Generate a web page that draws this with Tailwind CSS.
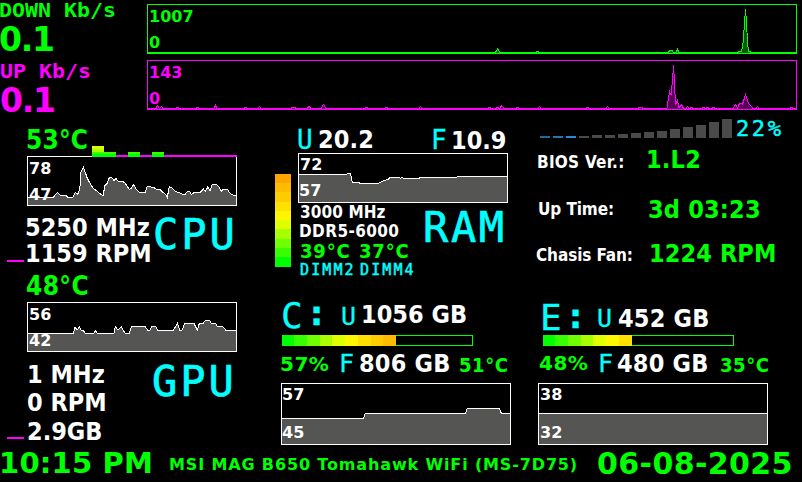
<!DOCTYPE html>
<html lang="en">
<head>
<meta charset="utf-8">
<title>System Monitor</title>
<script src="https://cdn.jsdelivr.net/npm/@tailwindcss/browser@4"></script>
</head>
<body class="bg-black overflow-hidden">
<main class="flex h-[482px] w-[802px] flex-col overflow-hidden bg-black whitespace-nowrap font-bold text-white font-['DejaVu_Sans_Condensed','DejaVu_Sans',sans-serif]">

  <!-- Network -->
  <header class="flex h-[117px] shrink-0 font-['DejaVu_Sans',sans-serif]">
    <div class="flex w-[147px] shrink-0 flex-col">
      <div class="mt-px -ml-px h-[19px] w-[103px] origin-left scale-x-[1.137] text-[19px] leading-[18px] text-[#0f0] font-['DejaVu_Sans_Mono',monospace]">DOWN Kb/s</div>
      <div class="mt-[3px] -ml-px h-[33px] text-[33px] leading-[33px] tracking-[-1.2px] text-[#0f0]">0.1</div>
      <div class="mt-[6px] h-[19px] w-[80px] origin-left scale-x-[1.137] text-[19px] leading-[18px] text-[#f0f] font-['DejaVu_Sans_Mono',monospace]">UP Kb/s</div>
      <div class="mt-[3px] h-[33px] text-[33px] leading-[33px] tracking-[-1.2px] text-[#f0f]">0.1</div>
    </div>
    <div class="flex flex-col gap-[6px] pt-1 text-[16px] leading-[17px]">
      <div class="relative flex h-[50px] w-[650px] flex-col text-[#0f0]">
        <svg class="absolute inset-0" width="650" height="50" viewBox="147 4 650 50" shape-rendering="crispEdges">
          <path d="M147 52.5H495L496.5 51L497.5 48.5L499 51L500 52.5H536V51.5H538V52.5H668L670 50.5H672L673.5 52.5H676L677.5 49.5L679 52.5H738V51.5H741L742.5 48L743.5 38L744.5 22L745.5 9.5L746.5 22L747.5 42L748.5 51.5H750V52.5H796" fill="#005500" stroke="#0f0"/>
          <rect x="147.5" y="4.5" width="649" height="49" fill="none" stroke="#0f0"/>
        </svg>
        <span class="relative mt-1 ml-0.5">1007</span>
        <span class="relative mt-[9px] ml-0.5">0</span>
      </div>
      <div class="relative flex h-[50px] w-[650px] flex-col text-[#f0f]">
        <svg class="absolute inset-0" width="650" height="50" viewBox="147 60 650 50" shape-rendering="crispEdges">
          <path d="M147 108.5H156L157.5 105.5L159.500 108.500L161.500 106.500L163 108.500H176V107.500H178V108.500H196V107.500H198V108.500H214L215.500 105.500L217 108.500H244V107.500H246V108.500H258L259.500 106.500L261 108.500H291V107.500H295V108.500H307L309 106.500L311 108.500H321L323.500 104.500L326 108.500H365V107.500H367V108.500H385V107.500H387V108.500H419L420.500 106.500L422 108.500H488V107.500H490V108.500H496V107.500H498V108.500H500L501.500 105.500L504 108.500H516V107.500H518V108.500H538L539.500 106.500L541 108.500H586V107.500H588V108.500H606L607.500 106.500L609 108.500H638V107.500H642V108.500H667L668.500 98L669.500 91.500L671 95L672.500 80L673.500 65.500L674.500 82L675.500 105L677.500 100L679 108L681.500 104.500L683.500 108.500H686L687.500 106.500L689 108.500H690V107.500H692V108.500H702V107.500H704V108.500H706V107.500H708V108.500H712V107.500H714V108.500H733L735.500 104.500L737.500 108L739.500 103.500L742.500 104L744.500 98L745.500 93.500L746.500 98L748.500 103.500L751 106L753 108.500H756L757.500 106.500L759 108.500H790V107.500H792V108.500H796" fill="#550055" stroke="#f0f"/>
          <rect x="147.500" y="60.500" width="649" height="49" fill="none" stroke="#f0f"/>
        </svg>
        <span class="relative mt-1 ml-0.5">143</span>
        <span class="relative mt-[9px] ml-0.5">0</span>
      </div>
    </div>
  </header>

  <div class="flex h-[331px] shrink-0">

    <!-- CPU and GPU -->
    <section class="flex w-[265px] shrink-0 flex-col">
      <div class="relative z-10 flex h-10 shrink-0 items-end">
        <div class="mb-1 ml-[26px] w-[66px] shrink-0 text-[26px] leading-[26px] tracking-[0.2px] text-[#0f0]">53°C</div>
        <div class="flex w-3 flex-col">
          <div class="h-[3px] bg-[#e0ff00]"></div><div class="h-[3px] bg-[#a8ff00]"></div><div class="h-[2px] bg-[#38ff00]"></div><div class="h-[3px] bg-[#0f0]"></div>
        </div>
        <div class="h-[5px] w-3 border-t-2 border-[#38ff00] bg-[#0f0]"></div>
        <div class="h-[2px] w-3 bg-[#f0f]"></div>
        <div class="h-[5px] w-3 border-t-2 border-[#38ff00] bg-[#0f0]"></div>
        <div class="h-[2px] w-3 bg-[#f0f]"></div>
        <div class="h-[5px] w-3 border-t-2 border-[#38ff00] bg-[#0f0]"></div>
        <div class="h-[2px] w-[73px] bg-[#f0f]"></div>
      </div>
      <div class="relative -mt-px ml-[27px] flex h-[50px] w-[210px] shrink-0 flex-col text-[16px] leading-[17px] font-['DejaVu_Sans',sans-serif]">
        <svg class="absolute inset-0" width="210" height="50" viewBox="81 108 630 150" shape-rendering="crispEdges">
          <path d="M81 257V232H160L172 217L180 225L198 226L203 232H218L226 217L232 223L236 219L240 200L243 155L250 142L256 158L262 175L270 190L278 203L290 213L300 221L309 227L315 196L322 190L328 173H336L342 182L348 176L354 183H366L376 190L388 209L394 205L401 193L408 208L418 217H436L442 199L460 202L470 208H480L488 216L500 227L502 232L508 199L518 206L526 215L536 217L546 222H556L562 214H568L574 223L586 216H602L610 207L616 214L624 200L630 212L637 193H648L656 200L664 214L670 208H682L690 220L700 226H711V257" fill="#555553" stroke="#fff" stroke-width="3"/>
          <rect x="82.500" y="109.500" width="627" height="147" fill="none" stroke="#fff" stroke-width="3"/>
        </svg>
        <span class="relative mt-1 ml-0.5">78</span>
        <span class="relative mt-[9px] ml-0.5">47</span>
      </div>
      <div class="flex h-[67px] shrink-0">
        <div class="mt-[54px] ml-[7px] h-[2px] w-[17px] bg-[#f0f]"></div>
        <div class="mt-[9px] ml-px w-[128px] shrink-0 text-[25px]">
          <div class="h-[26px] leading-[25px]">5250 MHz</div>
          <div class="h-[25px] leading-[25px]">1159 RPM</div>
        </div>
        <div class="mt-2 text-[42px] leading-[41px] font-normal tracking-[3px] text-[#0ff] [-webkit-text-stroke:0.7px_#0ff] font-['DejaVu_Sans_Mono',monospace]">CPU</div>
      </div>

      <div class="ml-[26px] h-[29px] shrink-0 text-[26px] leading-[26px] tracking-[0.4px] text-[#0f0]">48°C</div>
      <div class="relative ml-[27px] flex h-[50px] w-[210px] shrink-0 flex-col text-[16px] leading-[17px] font-['DejaVu_Sans',sans-serif]">
        <svg class="absolute inset-0" width="210" height="50" viewBox="81 96 630 150" shape-rendering="crispEdges">
          <path d="M81 245V190H220L225 170L231 181L238 170L244 181H250L255 190H282L287 181L291 190H342L346 170L354 181L364 170L375 190H388L394 170H436L443 181H449L455 170H467L473 181H520L532 160L539 181H546L554 160H582L592 181L598 160H610L616 151H628L634 160H646L652 169H668L678 181H711V245" fill="#555553" stroke="#fff" stroke-width="3"/>
          <rect x="82.500" y="97.500" width="627" height="147" fill="none" stroke="#fff" stroke-width="3"/>
        </svg>
        <span class="relative mt-1 ml-0.5">56</span>
        <span class="relative mt-[9px] ml-0.5">42</span>
      </div>
      <div class="flex shrink-0">
        <div class="mt-[85px] ml-[7px] h-[2px] w-[17px] bg-[#f0f]"></div>
        <div class="mt-[10px] ml-[3px] w-[125px] shrink-0 text-[25px] leading-[25px]">
          <div class="h-7">1 MHz</div>
          <div class="h-[29px]">0 RPM</div>
          <div class="h-[25px]">2.9GB</div>
        </div>
        <div class="mt-[9px] text-[42px] leading-[41px] font-normal tracking-[3px] text-[#0ff] [-webkit-text-stroke:0.7px_#0ff] font-['DejaVu_Sans_Mono',monospace]">GPU</div>
      </div>
    </section>

    <!-- RAM and drive C -->
    <section class="flex w-[260px] shrink-0 flex-col">
      <div class="ml-[32px] flex h-9 shrink-0 pt-[10px] text-[25px] leading-[25px]">
        <div class="mt-px w-[21px] text-[26px] font-normal text-[#0ff] [-webkit-text-stroke:0.3px_#0ff] font-['DejaVu_Sans_Mono',monospace]">U</div>
        <div class="w-[113px] tracking-[0.1px]">20.2</div>
        <div class="mt-px w-5 text-[26px] font-normal text-[#0ff] [-webkit-text-stroke:0.3px_#0ff] font-['DejaVu_Sans_Mono',monospace]">F</div>
        <div class="mt-px">10.9</div>
      </div>
      <div class="flex h-[144px] shrink-0">
        <div class="mt-[21px] ml-[10px] flex h-[93px] w-4 shrink-0 flex-col">
          <div class="h-[9px] bg-[#ffa500]"></div><div class="h-[9px] bg-[#ffbb00]"></div><div class="h-[10px] bg-[#ffcc00]"></div><div class="h-[9px] bg-[#ffe000]"></div><div class="h-[9px] bg-[#fff700]"></div><div class="h-[9px] bg-[#e0ff00]"></div><div class="h-[10px] bg-[#a8ff00]"></div><div class="h-[9px] bg-[#70ff00]"></div><div class="h-[9px] bg-[#38ff00]"></div><div class="h-[10px] bg-[#0f0]"></div>
        </div>
        <div class="ml-[7px] flex flex-col">
          <div class="relative flex h-[50px] w-[210px] shrink-0 flex-col text-[16px] leading-[17px] font-['DejaVu_Sans',sans-serif]">
            <svg class="absolute inset-0" width="210" height="50" viewBox="99 99 630 150" shape-rendering="crispEdges">
              <path d="M99 248V163H245L249 160H256L262 187H280L285 190H340L358 181L370 178L376 172H402L406 175L410 172L415 175H462V172H576L578 169H729V248" fill="#555553" stroke="#fff" stroke-width="3"/>
              <rect x="100.500" y="100.500" width="627" height="147" fill="none" stroke="#fff" stroke-width="3"/>
            </svg>
            <span class="relative mt-[3px] ml-0.5">72</span>
            <span class="relative mt-[9px] ml-px">57</span>
          </div>
          <div class="flex">
            <div class="mt-px w-[125px] pl-px text-[17px] leading-[17px]">
              <div class="ml-px h-[19px] tracking-[0.1px]">3000 MHz</div>
              <div class="h-[18px] tracking-[0.4px]">DDR5-6000</div>
              <div class="ml-px flex h-[21px] text-[20px] leading-[20px] tracking-[0.8px] text-[#0f0]"><span class="w-[59px]">39°C</span><span>37°C</span></div>
              <div class="ml-px flex text-[15px] leading-[16px] font-normal tracking-[2.1px] text-[#0ff] [-webkit-text-stroke:0.5px_#0ff] font-['DejaVu_Sans_Mono',monospace]"><span class="w-[60px]">DIMM2</span><span>DIMM4</span></div>
            </div>
            <div class="mt-1 text-[42px] leading-[41px] tracking-[2.6px] text-[#0ff] font-normal [-webkit-text-stroke:0.7px_#0ff] font-['DejaVu_Sans_Mono',monospace]">RAM</div>
          </div>
        </div>
      </div>

      <div class="ml-[16px] flex h-[38px] shrink-0 text-[25px] leading-[25px]">
        <div class="w-[60px] text-[36px] leading-[37px] font-normal tracking-[3px] text-[#0ff] [-webkit-text-stroke:0.3px_#0ff] font-['DejaVu_Sans_Mono',monospace]">C<span class="relative -top-[3px] font-bold">:</span></div>
        <div class="mt-[7px] w-5 font-normal text-[#0ff] [-webkit-text-stroke:0.3px_#0ff] font-['DejaVu_Sans_Mono',monospace]">U</div>
        <div class="mt-[5px]">1056 GB</div>
      </div>
      <div class="ml-[17px] flex h-[11px] w-[191px] shrink-0 border border-[#0f0]">
        <div class="-my-px -ml-px w-3 bg-[#0f0]"></div><div class="-my-px w-[13px] bg-[#38ff00]"></div><div class="-my-px w-[13px] bg-[#70ff00]"></div><div class="-my-px w-3 bg-[#a8ff00]"></div><div class="-my-px w-[13px] bg-[#e0ff00]"></div><div class="-my-px w-[13px] bg-[#fff700]"></div><div class="-my-px w-[13px] bg-[#ffe000]"></div><div class="-my-px w-3 bg-[#ffcc00]"></div><div class="-my-px w-[13px] bg-[#ffbb00]"></div>
      </div>
      <div class="ml-[15px] flex h-[37px] shrink-0 pt-[5px] text-[25px] leading-[25px]">
        <div class="mt-[3px] w-[59px] text-[20px] leading-[20px] tracking-[0.5px] text-[#0f0] font-['DejaVu_Sans',sans-serif]">57%</div>
        <div class="w-5 font-normal text-[#0ff] [-webkit-text-stroke:0.3px_#0ff] font-['DejaVu_Sans_Mono',monospace]">F</div>
        <div class="w-[100px] tracking-[0.2px]">806 GB</div>
        <div class="mt-1 text-[20px] leading-[20px] tracking-[0.6px] text-[#0f0]">51°C</div>
      </div>
      <div class="relative ml-4 flex h-[62px] w-[230px] shrink-0 flex-col text-[16px] leading-[17px] font-['DejaVu_Sans',sans-serif]">
        <svg class="absolute inset-0" width="230" height="62" viewBox="33 279 690 186" shape-rendering="crispEdges">
          <path d="M33 464V385H280L286 370H586L592 355H688L694 370H723V464" fill="#555553" stroke="#fff" stroke-width="3"/>
          <rect x="34.500" y="280.500" width="687" height="183" fill="none" stroke="#fff" stroke-width="3"/>
        </svg>
        <span class="relative mt-[3px] ml-px">57</span>
        <span class="relative mt-[21px] ml-px">45</span>
      </div>
    </section>

    <!-- Board info and drive E -->
    <section class="flex w-[277px] shrink-0 flex-col">
      <div class="flex h-[31px] shrink-0">
        <div class="ml-[15px] flex h-[21px] w-[196px] shrink-0 items-end gap-[3px]">
          <div class="h-[2px] w-[10px] shrink-0 bg-[#1b6a9c]"></div><div class="h-[2px] w-[10px] shrink-0 bg-[#1f78b0]"></div><div class="h-[2px] w-[10px] shrink-0 bg-[#1f8fdc]"></div><div class="h-[2px] w-[10px] shrink-0 bg-[#4a4a4a]"></div><div class="h-[3px] w-[10px] shrink-0 bg-[#4a4a4a]"></div><div class="h-[3px] w-[10px] shrink-0 bg-[#4a4a4a]"></div><div class="h-[4px] w-[10px] shrink-0 bg-[#4a4a4a]"></div><div class="h-[5px] w-[10px] shrink-0 bg-[#4a4a4a]"></div><div class="h-[6px] w-[10px] shrink-0 bg-[#4a4a4a]"></div><div class="h-[7px] w-[10px] shrink-0 bg-[#4a4a4a]"></div><div class="h-[9px] w-[10px] shrink-0 bg-[#4a4a4a]"></div><div class="h-[11px] w-[10px] shrink-0 bg-[#4a4a4a]"></div><div class="h-[13px] w-[10px] shrink-0 bg-[#4a4a4a]"></div><div class="h-4 w-[10px] shrink-0 bg-[#4a4a4a]"></div><div class="h-[19px] w-[10px] shrink-0 bg-[#4a4a4a]"></div>
        </div>
        <div class="text-[22px] leading-[23px] font-normal tracking-[2.6px] text-[#0ff] [-webkit-text-stroke:0.5px_#0ff] font-['DejaVu_Sans_Mono',monospace]">22%</div>
      </div>
      <div class="ml-[12px] flex h-[50px] shrink-0 text-[17px] leading-[17px]">
        <div class="mt-[6px] w-[109px] tracking-[0.25px]">BIOS Ver.:</div>
        <div class="-mt-px text-[25px] leading-[25px] tracking-[0.2px] text-[#0f0]">1.L2</div>
      </div>
      <div class="ml-[13px] flex h-11 shrink-0 text-[17px] leading-[17px]">
        <div class="mt-[3px] w-[110px] tracking-[-0.1px]">Up Time:</div>
        <div class="-mt-px text-[25px] leading-[25px] tracking-[0.2px] text-[#0f0]">3d 03:23</div>
      </div>
      <div class="ml-[11px] flex h-[57px] shrink-0 text-[17px] leading-[17px]">
        <div class="mt-[5px] w-[113px] tracking-[-0.1px]">Chasis Fan:</div>
        <div class="-mt-px text-[25px] leading-[25px] tracking-[0.1px] text-[#0f0]">1224 RPM</div>
      </div>

      <div class="ml-[15px] flex h-9 shrink-0 text-[25px] leading-[25px]">
        <div class="w-[57px] text-[36px] leading-[37px] font-normal tracking-[3px] text-[#0ff] [-webkit-text-stroke:0.3px_#0ff] font-['DejaVu_Sans_Mono',monospace]">E<span class="relative -top-[2px] font-bold">:</span></div>
        <div class="mt-[7px] w-[21px] font-normal text-[#0ff] [-webkit-text-stroke:0.3px_#0ff] font-['DejaVu_Sans_Mono',monospace]">U</div>
        <div class="mt-[7px] tracking-[0.2px]">452 GB</div>
      </div>
      <div class="ml-[18px] flex h-[11px] w-[191px] shrink-0 border border-[#0f0]">
        <div class="-my-px -ml-px w-3 bg-[#0f0]"></div><div class="-my-px w-[13px] bg-[#38ff00]"></div><div class="-my-px w-[13px] bg-[#70ff00]"></div><div class="-my-px w-3 bg-[#a8ff00]"></div><div class="-my-px w-[13px] bg-[#e0ff00]"></div><div class="-my-px w-[13px] bg-[#fff700]"></div><div class="-my-px w-[13px] bg-[#ffe000]"></div>
      </div>
      <div class="ml-[14px] flex h-[37px] shrink-0 pt-[5px] text-[25px] leading-[25px]">
        <div class="mt-[2px] w-[59px] text-[20px] leading-[20px] tracking-[0.5px] text-[#0f0] font-['DejaVu_Sans',sans-serif]">48%</div>
        <div class="w-[19px] font-normal text-[#0ff] [-webkit-text-stroke:0.3px_#0ff] font-['DejaVu_Sans_Mono',monospace]">F</div>
        <div class="w-[103px] tracking-[0.2px]">480 GB</div>
        <div class="mt-1 text-[20px] leading-[20px] tracking-[0.6px] text-[#0f0]">35°C</div>
      </div>
      <div class="relative ml-[13px] flex h-[62px] w-[230px] shrink-0 flex-col text-[16px] leading-[17px] font-['DejaVu_Sans',sans-serif]">
        <svg class="absolute inset-0" width="230" height="62" viewBox="39 279 690 186" shape-rendering="crispEdges">
          <path d="M39 464V370H729V464" fill="#555553" stroke="#fff" stroke-width="3"/>
          <rect x="40.500" y="280.500" width="687" height="183" fill="none" stroke="#fff" stroke-width="3"/>
        </svg>
        <span class="relative mt-[3px] ml-0.5">38</span>
        <span class="relative mt-[21px] ml-0.5">32</span>
      </div>
    </section>
  </div>

  <footer class="flex h-[34px] shrink-0 text-[#0f0] font-['DejaVu_Sans',sans-serif]">
    <div class="-ml-px w-[170px] shrink-0 text-[29px] leading-[30px] tracking-[0.2px]">10:15 PM</div>
    <div class="mt-2 w-[428px] shrink-0 text-[16px] leading-[17px] tracking-[0.86px]">MSI MAG B650 Tomahawk WiFi (MS-7D75)</div>
    <div class="text-[30px] leading-[31px] tracking-[0.4px]">06-08-2025</div>
  </footer>
</main>
</body>
</html>
